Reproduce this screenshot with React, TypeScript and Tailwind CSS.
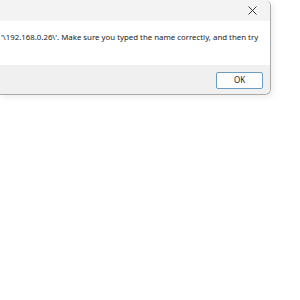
export default function App() {
  return (
    <div className="h-[300px] w-[300px] bg-white overflow-hidden" style={{ fontFamily: '"Noto Sans", "Open Sans", sans-serif' }}>
      <div className="w-[271px] border-r border-b border-[#a9a9a9] rounded-br-[6px] rounded-tr-[6px] overflow-hidden shadow-[2px_2px_6px_rgba(0,0,0,0.08)]">
        <div className="h-[21px] bg-[#f3f3f3] flex justify-end items-center pr-[6px]">
          <div className="w-[24px] h-[20px] flex items-center justify-center">
            <svg width="9" height="9" viewBox="0 0 9 9">
              <path d="M0.5 0.5 L8.5 8.5 M8.5 0.5 L0.5 8.5" stroke="#3a3a3a" strokeWidth="1" fill="none" />
            </svg>
          </div>
        </div>
        <div className="h-[44px] bg-white pt-[10px] pl-[1px] text-[7.85px] leading-[12px] text-[#1a1a1a] whitespace-nowrap">
          '\192.168.0.26\'. Make sure you typed the name correctly, and then try
        </div>
        <div className="h-[29px] bg-[#f0f0f0] flex justify-end items-center pr-[7px] pt-[1px]">
          <button className="w-[47px] h-[17px] border border-[#6b9cc4] rounded-[2px] bg-[#fdfdfd] text-[8px] leading-none text-[#1a1a1a] flex items-center justify-center">
            OK
          </button>
        </div>
      </div>
    </div>
  );
}
